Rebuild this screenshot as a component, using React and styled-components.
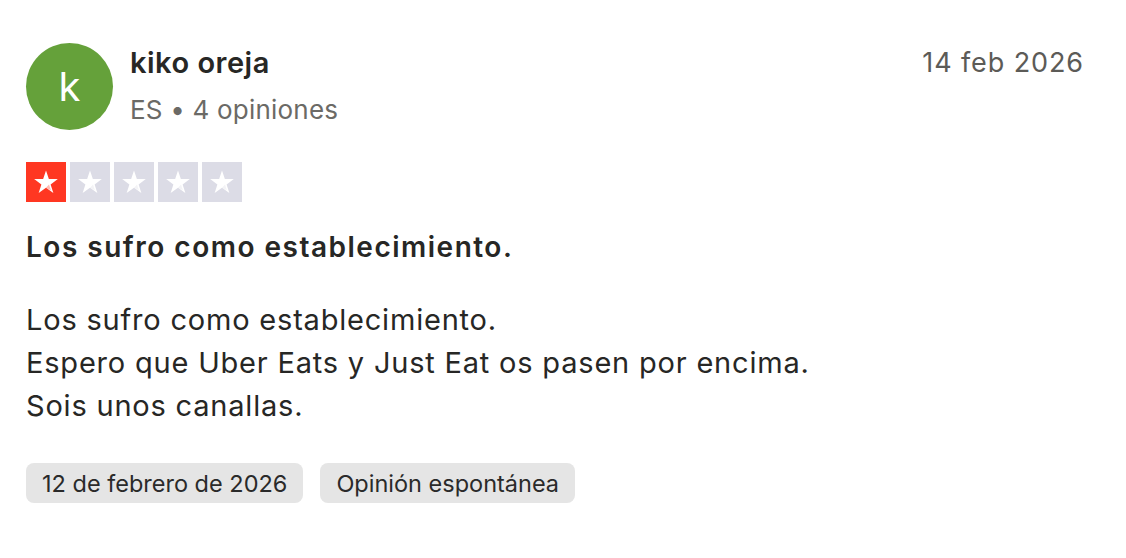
import styled, { createGlobalStyle } from "styled-components";

const GlobalStyle = createGlobalStyle`
  body {
    margin: 0;
    background: #ffffff;
    font-family: Inter, "Noto Sans", sans-serif;
    color: #272725;
  }
`;

const Card = styled.article`
  padding: 43px 42px 40px 26px;
  display: flex;
  flex-direction: column;
`;

const Header = styled.header`
  display: flex;
  align-items: flex-start;
`;

const Avatar = styled.div`
  width: 87px;
  height: 87px;
  border-radius: 50%;
  background: #65a13a;
  color: #ffffff;
  display: flex;
  align-items: center;
  justify-content: center;
  font-size: 40px;
  font-weight: 400;
  flex-shrink: 0;
`;

const Consumer = styled.div`
  margin-left: 17px;
  display: flex;
  flex-direction: column;
  flex: 1;
`;

const Name = styled.div`
  font-size: 29px;
  font-weight: 600;
  line-height: 40px;
  letter-spacing: 0.5px;
`;

const Meta = styled.div`
  font-size: 26px;
  color: #6b6a66;
  line-height: 40px;
  margin-top: 7px;
  letter-spacing: 0.2px;
`;

const DateText = styled.time`
  font-size: 27px;
  color: #5c5b57;
  line-height: 40px;
  letter-spacing: 0.9px;
`;

const Stars = styled.div`
  display: flex;
  gap: 4px;
  margin-top: 32px;
`;

const StarBox = styled.div`
  width: 40px;
  height: 40px;
  background: ${(p) => (p.$on ? "#ff3722" : "#dcdce6")};
  display: flex;
  align-items: center;
  justify-content: center;
`;

const Title = styled.h2`
  margin: 27px 0 0;
  font-size: 28px;
  font-weight: 600;
  line-height: 36px;
  letter-spacing: 1.5px;
`;

const Body = styled.p`
  margin: 33px 0 0;
  font-size: 29px;
  line-height: 43px;
  font-weight: 400;
  letter-spacing: 0.8px;
`;

const Tags = styled.div`
  display: flex;
  gap: 17px;
  margin-top: 36px;
`;

const Tag = styled.span`
  background: #e5e5e5;
  border-radius: 8px;
  height: 40px;
  padding: 0 16px;
  display: flex;
  align-items: center;
  font-size: 23.5px;
  color: #2a2a2a;
`;

const Star = ({ on }) => (
  <StarBox $on={on}>
    <svg width="28" height="28" viewBox="0 0 24 24">
      <path
        d="M12 2.2l2.45 7.3h7.7l-6.2 4.55 2.35 7.35L12 16.9l-6.3 4.5 2.35-7.35L1.85 9.5h7.7z"
        fill="#ffffff"
      />
      <path d="M14.6 14.2l1.6 4.9L12 16.9z" fill={on ? "#ff3722" : "#dcdce6"} opacity="0.35" />
    </svg>
  </StarBox>
);

export default function App() {
  return (
    <>
      <GlobalStyle />
      <Card>
        <Header>
          <Avatar>k</Avatar>
          <Consumer>
            <Name>kiko oreja</Name>
            <Meta>ES • 4 opiniones</Meta>
          </Consumer>
          <DateText>14 feb 2026</DateText>
        </Header>
        <Stars>
          {[1, 2, 3, 4, 5].map((n) => (
            <Star key={n} on={n === 1} />
          ))}
        </Stars>
        <Title>Los sufro como establecimiento.</Title>
        <Body>
          Los sufro como establecimiento.
          <br />
          Espero que Uber Eats y Just Eat os pasen por encima.
          <br />
          Sois unos canallas.
        </Body>
        <Tags>
          <Tag>12 de febrero de 2026</Tag>
          <Tag>Opinión espontánea</Tag>
        </Tags>
      </Card>
    </>
  );
}
